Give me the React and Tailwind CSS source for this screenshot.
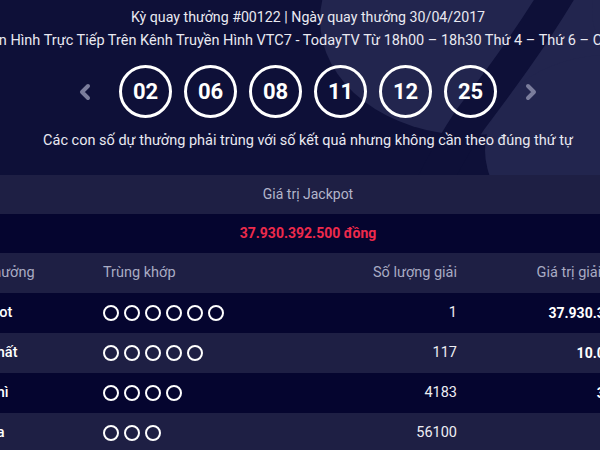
import { ChevronLeft, ChevronRight } from 'lucide-react';

const numbers = ['02', '06', '08', '11', '12', '25'];

const prizes = [
  { name: 'Jackpot', match: 6, count: '1', value: '37.930.392.500' },
  { name: 'Giải nhất', match: 5, count: '117', value: '10.000.000' },
  { name: 'Giải nhì', match: 4, count: '4183', value: '300.000' },
  { name: 'Giải ba', match: 3, count: '56100', value: '30.000' },
];

function Backdrop() {
  return (
    <svg className="absolute inset-0 pointer-events-none" width="616" height="175" viewBox="0 0 616 175">
      <ellipse cx="470" cy="20" rx="150" ry="115" fill="#22254e" />
      <ellipse cx="610" cy="150" rx="125" ry="95" fill="#22254e" />
      <path d="M560 -10 C 530 40, 500 80, 470 120 C 450 150, 440 170, 430 190" stroke="#0e1038" strokeWidth="34" fill="none" />
      <ellipse cx="620" cy="10" rx="28" ry="45" fill="#22254e" />
    </svg>
  );
}

export default function App() {
  return (
    <div className="w-[600px] h-[450px] overflow-hidden bg-[#05052f] text-[#e9e9f1]" style={{ fontFamily: 'Roboto, "Noto Sans", sans-serif' }}>
      <div className="relative w-[616px] h-[175px] bg-[#0e1038] flex flex-col items-center pt-[7px]">
        <Backdrop />
        <div className="relative text-[14.2px] leading-[20px] whitespace-nowrap">
          Kỳ quay thưởng #00122 | Ngày quay thưởng 30/04/2017
        </div>
        <div className="relative mt-[4px] text-[14.5px] leading-[20px] whitespace-nowrap">
          Truyền Hình Trực Tiếp Trên Kênh Truyền Hình VTC7 - TodayTV Từ 18h00 – 18h30 Thứ 4 – Thứ 6 – Chủ Nhật
        </div>
        <div className="relative mt-[14px] flex items-center">
          <ChevronLeft className="w-[24px] h-[24px] text-[#7b7d9c] mr-[22px]" strokeWidth={4} />
          <div className="flex gap-[12px]">
            {numbers.map((n) => (
              <div key={n} className="w-[53px] h-[53px] rounded-full border-[3px] border-white flex items-center justify-center text-[22px] font-bold text-white">
                {n}
              </div>
            ))}
          </div>
          <ChevronRight className="w-[24px] h-[24px] text-[#7b7d9c] ml-[22px]" strokeWidth={4} />
        </div>
        <div className="relative mt-[13px] text-[14.5px] leading-[20px] whitespace-nowrap">
          Các con số dự thưởng phải trùng với số kết quả nhưng không cần theo đúng thứ tự
        </div>
      </div>

      <div className="w-[616px]">
        <div className="h-[39px] bg-[#1e1f44] flex items-center justify-center text-[14px] text-[#b3b5ca]">
          Giá trị Jackpot
        </div>
        <div className="h-[39px] bg-[#05052f] flex items-center justify-center text-[14px] font-bold text-[#ee2a4c]">
          37.930.392.500 đồng
        </div>
      </div>

      <div className="ml-[-40px] w-[700px] text-[14.5px]">
        <div className="h-[40px] bg-[#1e1f44] flex items-center text-[#a9abc3]">
          <div className="w-[143px]">Giải thưởng</div>
          <div className="w-[200px]">Trùng khớp</div>
          <div className="w-[154px] text-right">Số lượng giải</div>
          <div className="w-[194px] text-right">Giá trị giải thưởng</div>
        </div>
        {prizes.map((p, i) => (
          <div key={p.name} className={`h-[40px] flex items-center ${i % 2 === 0 ? 'bg-[#05052f]' : 'bg-[#1e1f44]'}`}>
            <div className="w-[143px] font-medium text-white">{p.name}</div>
            <div className="w-[200px] flex gap-[5px]">
              {Array.from({ length: p.match }).map((_, k) => (
                <span key={k} className="w-[16px] h-[16px] rounded-full border-[2.5px] border-white" />
              ))}
            </div>
            <div className="w-[154px] text-right text-[#ededf3]">{p.count}</div>
            <div className="w-[192px] text-right text-[14px] font-bold text-white">{p.value}</div>
          </div>
        ))}
      </div>
    </div>
  );
}
